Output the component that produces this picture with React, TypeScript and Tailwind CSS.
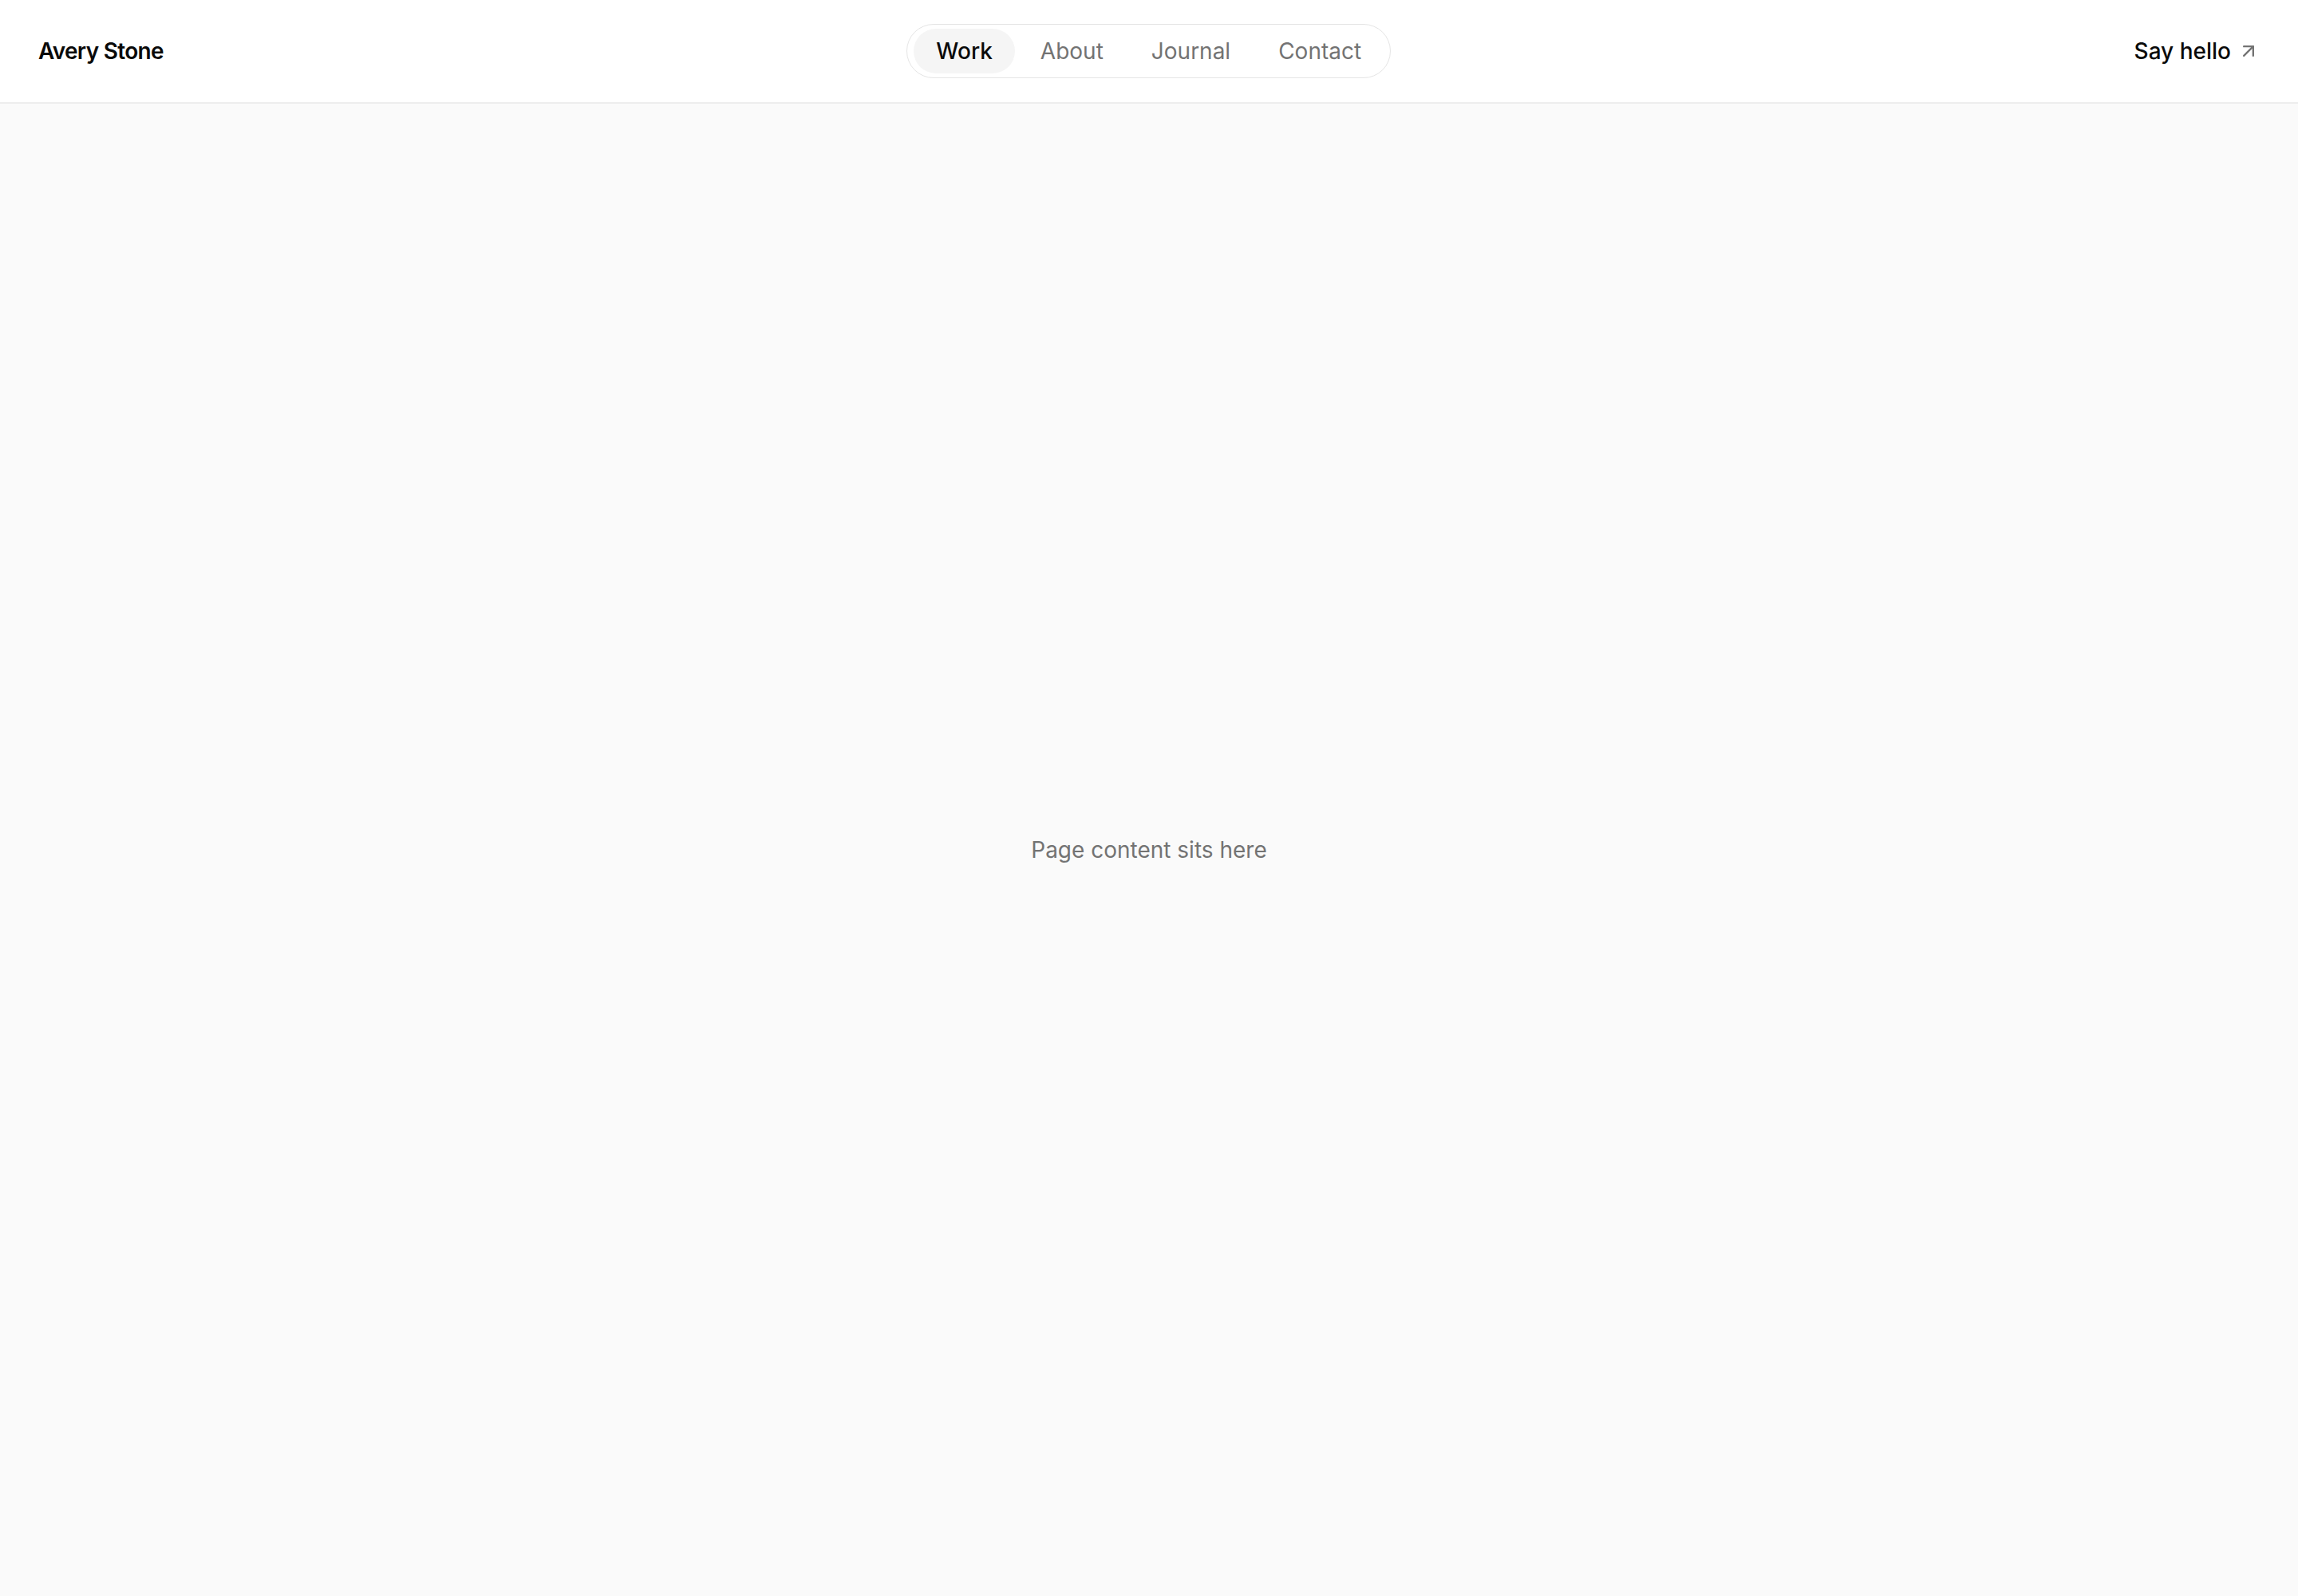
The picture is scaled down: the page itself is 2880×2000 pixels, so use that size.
import { ArrowUpRight } from "lucide-react";

const links = ["Work", "About", "Journal", "Contact"];

export default function App() {
  return (
    <div className="min-h-screen flex flex-col bg-neutral-50 font-['Inter',sans-serif] text-neutral-950">
      <header className="h-[130px] shrink-0 flex items-center justify-between px-12 bg-white border-b-2 border-neutral-200/70">
        <a className="text-[28px] font-semibold tracking-tight">Avery Stone</a>

        <nav className="flex items-center gap-1 px-2 py-[5px] rounded-full border border-neutral-200 bg-white">
          {links.map((l, i) => (
            <a
              key={l}
              className={
                i === 0
                  ? "px-7 py-2 rounded-full text-[28px] font-medium leading-10 bg-neutral-100 text-neutral-950"
                  : "px-7 py-2 rounded-full text-[28px] leading-10 text-neutral-500"
              }
            >
              {l}
            </a>
          ))}
        </nav>

        <a className="flex items-center gap-2 text-[28px] font-medium">
          Say hello
          <ArrowUpRight size={28} className="text-neutral-500" />
        </a>
      </header>

      <main className="flex-1 flex items-center justify-center">
        <p className="text-[28px] text-neutral-500">Page content sits here</p>
      </main>
    </div>
  );
}
